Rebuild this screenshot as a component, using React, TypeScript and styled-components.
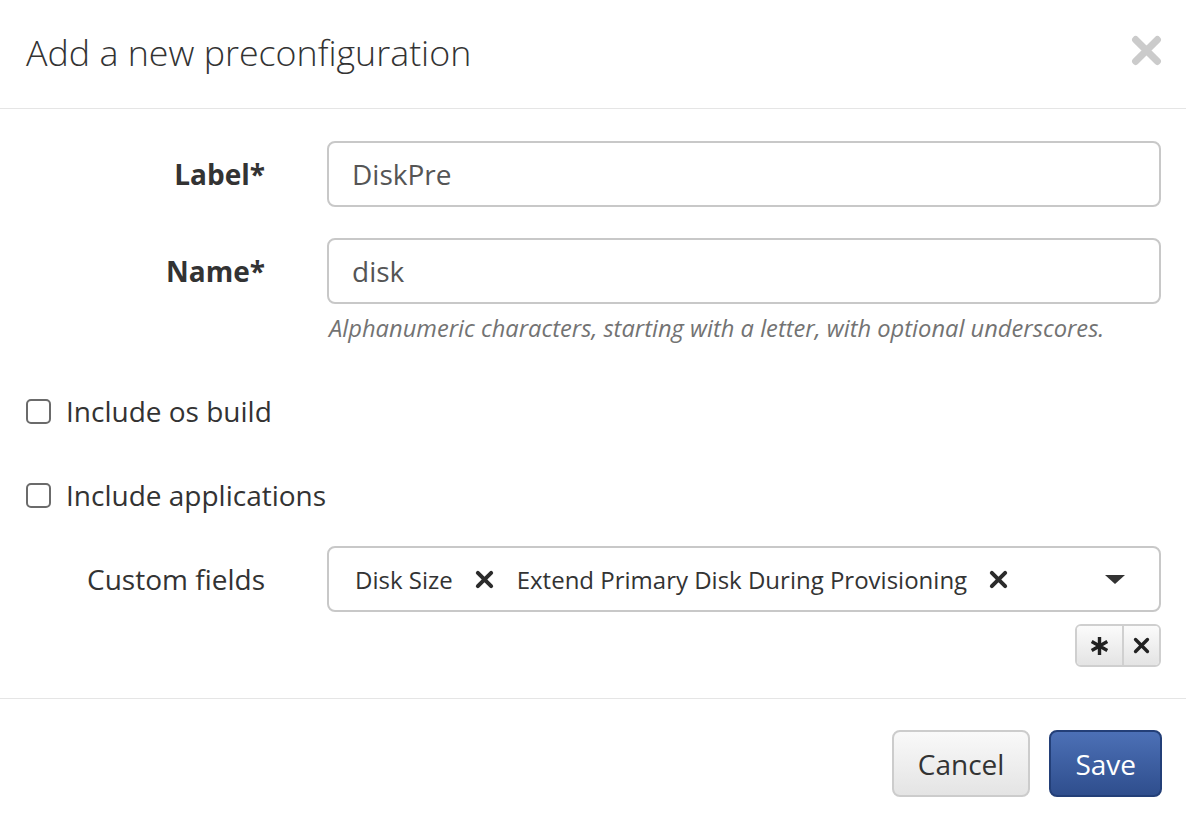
import { FC, ReactNode } from "react";
import styled, { createGlobalStyle } from "styled-components";

const GlobalStyle = createGlobalStyle`
  html, body {
    margin: 0;
    padding: 0;
    background: #fff;
  }
  body {
    font-family: "Open Sans", "Liberation Sans", sans-serif;
    color: #333;
  }
  * {
    box-sizing: border-box;
  }
`;

type FieldProps = {
  label: string;
  bold?: boolean;
  children: ReactNode;
};

const Field: FC<FieldProps> = ({ label, bold, children }) => (
  <Row>
    <FieldLabel $bold={bold}>{label}</FieldLabel>
    <div>{children}</div>
  </Row>
);

const TimesIcon: FC<{ size: number; weight: number; color: string }> = ({
  size,
  weight,
  color,
}) => (
  <svg width={size} height={size} viewBox="0 0 20 20" aria-hidden>
    <path
      d="M3 3 L17 17 M17 3 L3 17"
      stroke={color}
      strokeWidth={weight}
      strokeLinecap="round"
      fill="none"
    />
  </svg>
);

const AsteriskIcon = () => (
  <svg width={21} height={20} viewBox="0 0 21 20" aria-hidden>
    <path
      d="M10.5 1 L10.5 19 M2.7 5.5 L18.3 14.5 M18.3 5.5 L2.7 14.5"
      stroke="#222"
      strokeWidth={3.4}
      strokeLinecap="butt"
      fill="none"
    />
  </svg>
);

const CheckRow: FC<{ label: string }> = ({ label }) => (
  <CheckLabel>
    <CheckBox type="checkbox" />
    {label}
  </CheckLabel>
);

const Tag: FC<{ text: string }> = ({ text }) => (
  <TagItem>
    {text}
    <TagRemove>
      <TimesIcon size={19} weight={4.2} color="#2b2b2b" />
    </TagRemove>
  </TagItem>
);

export default function App() {
  return (
    <>
      <GlobalStyle />
      <Modal>
        <Header>
          <Title>Add a new preconfiguration</Title>
          <CloseButton aria-label="Close">
            <TimesIcon size={31} weight={4.6} color="#cbcbcb" />
          </CloseButton>
        </Header>
        <Body>
          <Field label="Label*" bold>
            <Input defaultValue="DiskPre" />
          </Field>
          <Field label="Name*" bold>
            <Input defaultValue="disk" />
            <Help>
              Alphanumeric characters, starting with a letter, with optional
              underscores.
            </Help>
          </Field>
          <Checks>
            <CheckRow label="Include os build" />
            <CheckRow label="Include applications" />
          </Checks>
          <Field label="Custom fields">
            <Select>
              <Tag text="Disk Size" />
              <Tag text="Extend Primary Disk During Provisioning" />
              <Caret />
            </Select>
            <Tools>
              <ToolGroup>
                <ToolButton $wide>
                  <AsteriskIcon />
                </ToolButton>
                <ToolButton>
                  <TimesIcon size={17} weight={4} color="#222" />
                </ToolButton>
              </ToolGroup>
            </Tools>
          </Field>
        </Body>
        <Footer>
          <Button>Cancel</Button>
          <Button $primary>Save</Button>
        </Footer>
      </Modal>
    </>
  );
}

const Modal = styled.div`
  width: 1186px;
  height: 816px;
  background: #fff;
`;

const Header = styled.div`
  height: 109px;
  padding: 0 24px 4px 26px;
  border-bottom: 1px solid #e5e5e5;
  display: flex;
  align-items: center;
  justify-content: space-between;
`;

const Title = styled.h4`
  margin: 0;
  font-size: 35.8px;
  font-weight: 300;
  color: #333;
`;

const CloseButton = styled.button`
  border: 0;
  background: none;
  padding: 0;
  margin-top: -4px;
  display: flex;
  cursor: pointer;
`;

const Body = styled.div`
  padding: 32px 25px 0 26px;
  height: 589px;
`;

const Row = styled.div`
  display: grid;
  grid-template-columns: 239px 834px;
  column-gap: 62px;
  margin-bottom: 31px;
`;

const FieldLabel = styled.label<{ $bold?: boolean }>`
  font-size: 28px;
  font-weight: ${({ $bold }) => ($bold ? 700 : 400)};
  text-align: right;
  line-height: 66px;
  color: #333;
`;

const Input = styled.input`
  display: block;
  width: 100%;
  height: 66px;
  padding: 0 23px;
  font-family: inherit;
  font-size: 28px;
  color: #555;
  border: 2px solid #c8c8c8;
  border-radius: 8px;
  outline: none;
`;

const Help = styled.p`
  margin: 9px 0 0 2px;
  font-size: 23.7px;
  font-style: italic;
  color: #737373;
  line-height: 30px;
`;

const Checks = styled.div`
  display: flex;
  flex-direction: column;
  gap: 44px;
  padding-top: 17px;
  margin-bottom: 31px;
`;

const CheckLabel = styled.label`
  display: flex;
  align-items: center;
  gap: 15px;
  height: 40px;
  font-size: 28px;
  color: #333;
`;

const CheckBox = styled.input`
  appearance: none;
  width: 25px;
  height: 25px;
  margin: 0;
  border: 2px solid #6b6b6b;
  border-radius: 5px;
  background: #fff;
`;

const Select = styled.div`
  height: 66px;
  border: 2px solid #c8c8c8;
  border-radius: 8px;
  display: flex;
  align-items: center;
  padding: 0 34px 0 26px;
`;

const TagItem = styled.span`
  display: inline-flex;
  align-items: center;
  font-size: 24px;
  color: #333;
  margin-right: 23px;
`;

const TagRemove = styled.span`
  display: inline-flex;
  margin-left: 22px;
`;

const Caret = styled.span`
  margin-left: auto;
  width: 0;
  height: 0;
  border-left: 10px solid transparent;
  border-right: 10px solid transparent;
  border-top: 9px solid #333;
`;

const Tools = styled.div`
  display: flex;
  justify-content: flex-end;
  margin-top: 12px;
`;

const ToolGroup = styled.div`
  display: flex;
  height: 43px;
  border: 2px solid #cfcfcf;
  border-radius: 6px;
  overflow: hidden;
`;

const ToolButton = styled.button<{ $wide?: boolean }>`
  width: ${({ $wide }) => ($wide ? "45px" : "37px")};
  border: 0;
  padding: 0;
  display: flex;
  align-items: center;
  justify-content: center;
  background: linear-gradient(#fbfbfb, #e4e4e4);
  & + & {
    border-left: 2px solid #d0d0d0;
  }
`;

const Footer = styled.div`
  border-top: 1px solid #e5e5e5;
  padding: 31px 24px 0;
  display: flex;
  justify-content: flex-end;
  gap: 19px;
`;

const Button = styled.button<{ $primary?: boolean }>`
  height: 67px;
  padding: 0 24px;
  font-family: inherit;
  font-size: 28px;
  border-radius: 8px;
  cursor: pointer;
  color: ${({ $primary }) => ($primary ? "#fff" : "#333")};
  border: 2px solid ${({ $primary }) => ($primary ? "#233f78" : "#cccccc")};
  background: ${({ $primary }) =>
    $primary
      ? "linear-gradient(#4c70b6, #2f4e8d)"
      : "linear-gradient(#f9f9f9, #e4e4e4)"};
`;
